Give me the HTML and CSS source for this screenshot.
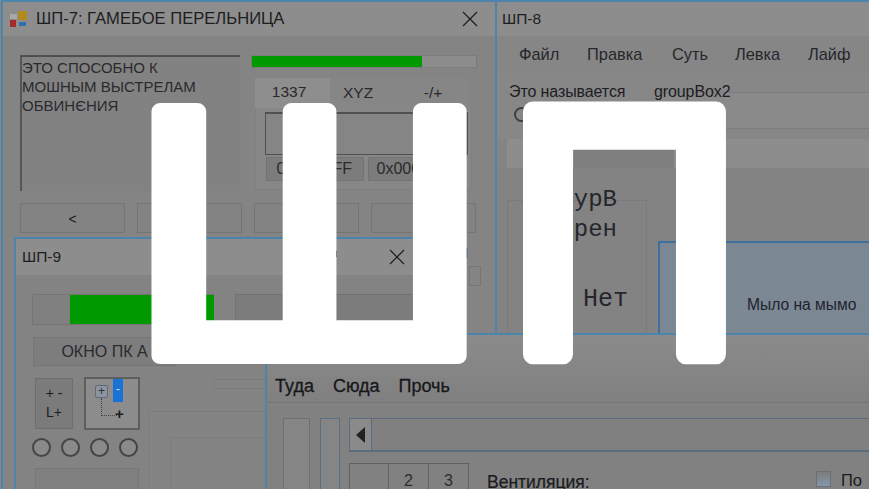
FILE: index.html
```html
<!DOCTYPE html>
<html lang="ru">
<head>
<meta charset="utf-8">
<title>ШП</title>
<link rel="stylesheet" href="styles.css">
</head>
<body>
<main class="desktop">

  <section class="win win7">
    <header class="titlebar">
      <svg class="appicon" width="20" height="18" viewBox="0 0 20 18"><rect x="1" y="4" width="7" height="5" fill="#a8a8a8"/><rect x="9" y="1" width="9" height="9" fill="#b08a1c"/><rect x="1" y="10" width="6" height="7" fill="#a52a2a"/><rect x="10" y="12" width="7" height="4" fill="#2f6fb0"/></svg>
      <h1 class="title t7">ШП-7: ГАМЕБОЕ ПЕРЕЛЬНИЦА</h1>
      <svg class="close c7" width="16" height="16" viewBox="0 0 16 16"><path d="M1 1 15 15M15 1 1 15" stroke="#1c1c1c" stroke-width="1.2" fill="none"/></svg>
    </header>
    <div class="body7">
      <div class="top7">
        <div class="memo">ЭТО СПОСОБНО К<br>МОШНЫМ ВЫСТРЕЛАМ<br>ОБВИНЄНИЯ</div>
        <div class="side7">
          <div class="bar7"><div class="fill" style="width:76%"></div></div>
          <div class="tabs">
            <span class="tab active">1337</span><span class="tab">XYZ</span><span class="tab">-/+</span>
          </div>
          <div class="tabpanel">
            <div class="inputbox"></div>
            <div class="hexrow"><span class="hex">0xFFFFFF</span><span class="hex hexl">0x000000</span></div>
          </div>
        </div>
      </div>
      <div class="btnrow"><span class="btn">&lt;</span><span class="btn"></span><span class="btn"></span><span class="btn"></span></div>
    </div>
    <span class="peek">И</span>
    <span class="peekbox"></span>
  </section>

  <section class="win win8">
    <header class="titlebar tb8"><h2 class="title t8">ШП-8</h2></header>
    <nav class="menu8"><span>Файл</span><span>Правка</span><span>Суть</span><span>Левка</span><span>Лайф</span></nav>
    <div class="groups8">
      <div class="g1"><span>Это называется</span><i class="radio small"></i></div>
      <div class="g2"><span>groupBox2</span></div>
    </div>
    <div class="strip8"></div>
    <div class="lower8">
      <div class="mono">
        <p>урВ</p><p>рен</p><p class="net">Нет</p>
      </div>
      <div class="soap">Мыло на мымо</div>
    </div>
  </section>

  <section class="win win9">
    <header class="titlebar tb9">
      <h2 class="title t9">ШП-9</h2>
      <i class="tick"></i>
      <svg class="close c9" width="16" height="16" viewBox="0 0 16 16"><path d="M1 1 15 15M15 1 1 15" stroke="#1c1c1c" stroke-width="1.2" fill="none"/></svg>
    </header>
    <div class="body9">
      <div class="row9a"><div class="bar9"><div class="fill fill9"></div></div><div class="box9"></div></div>
      <div class="okno">ОКНО ПК А</div>
      <div class="row9c">
        <div class="plusbox">+ -<br>L+</div>
        <div class="tree">
          <span class="exp">+</span><span class="sel">-</span>
          <span class="branch"></span><span class="leaf">+</span>
        </div>
      </div>
      <div class="radios"><i class="radio"></i><i class="radio"></i><i class="radio"></i><i class="radio"></i></div>
      <div class="box9b"></div>
    </div>
    <div class="faint f1"></div><div class="faint f2"></div><div class="faint f3"></div>
  </section>

  <section class="win win10">
    <nav class="menu10"><span>Туда</span><span>Сюда</span><span>Прочь</span></nav>
    <div class="body10">
      <div class="vbox"></div>
      <div class="vbox blue"></div>
      <div class="main10">
        <div class="scroll"><span class="arrow"><svg width="10" height="16" viewBox="0 0 10 16"><path d="M9 0V16L0 8Z" fill="#222"/></svg></span></div>
        <div class="row10">
          <div class="numtabs"><span></span><span>2</span><span>3</span></div>
          <strong class="vent">Вентиляция:</strong>
          <label class="check"><i class="cb"></i>По</label>
        </div>
      </div>
    </div>
  </section>

  <svg class="logo" width="869" height="489" viewBox="0 0 869 489" role="img">
    <text class="glyph gsh" transform="translate(128 356) scale(1.11 1)">Ш</text>
    <text class="glyph gp" transform="translate(506 354) scale(.934 1)">П</text>
  </svg>
</main>
</body>
</html>
```
FILE: styles.css
```css
*{box-sizing:border-box}
html,body{margin:0;padding:0}
body{width:869px;height:489px;overflow:hidden;background:#858585;font-family:"Liberation Sans",Arial,sans-serif;color:#1d1d22}
.desktop{position:relative;width:869px;height:489px;overflow:hidden}
.win{position:absolute;background:#848484;border:2px solid #4b85ab}
.titlebar{display:flex;align-items:center;background:#8d8d8d}
.title{margin:0;font-weight:400;font-size:16px;white-space:nowrap}
.close{margin-left:auto}

.win7{left:1px;top:0;width:496px;height:510px}
.win7 .titlebar{height:34px;padding:0 17px 0 6px;gap:7px}
.t7{font-size:16.6px}
.body7{padding:19px 18px 0 17px}
.top7{display:flex;gap:11px}
.memo{width:221px;height:136px;border-top:2px solid #4f4f4f;border-left:2px solid #555;font-size:15px;line-height:19px;padding:1px 0 0 0;color:#2a2a2e;background:#828282}
.side7{width:228px}
.bar7{height:13px;background:#8d8d8d;border:1px solid #7c7c7c}
.fill{height:100%;background:#009900}
.tabs{display:flex;margin:10px 0 0 4px;height:29px}
.tab{width:69px;text-align:center;font-size:15.5px;line-height:26px;padding-top:2px;background:#868686;color:#28282c}
.tab:nth-child(2){padding-right:12px}
.tab.active{width:75px;background:#8e8e8e;height:30px;padding:1px 6px 0 0}
.tabpanel{margin:-1px 5px 0 4px;height:84px;background:#878787;padding:5px 0 0 9px;border:1px solid #808080}
.inputbox{width:203px;height:43px;border:1px solid #505050;border-width:2px 2px 1px 1px;background:#858585}
.hexrow{display:flex;gap:4px;margin-top:2px;margin-left:1px}
.hex{width:98px;height:24px;border:1px solid #747474;background:#7c7c7c;font-size:16px;line-height:22px;text-align:left;padding-left:10px;color:#2a2a2e;white-space:nowrap;overflow:hidden}
.hexl{padding-left:8px}
.btnrow{display:grid;grid-template-columns:105px 105px 105px 105px;column-gap:12px;margin:12px 0 0 0}
.btn{height:30px;border:1px solid #757575;background:#838383;text-align:center;font-size:14px;line-height:30px}
.peek{position:absolute;left:455px;top:243px;font-size:14px;color:#1d1d22}
.peekbox{position:absolute;left:466px;top:264px;width:12px;height:20px;border:1px solid #757575}

.win8{left:495px;top:0;width:376px;height:335px;background:#848484}
.tb8{height:34px;padding-left:5px}
.t8{font-size:15.5px}
.menu8{display:flex;height:36px;align-items:center;background:#868686;padding-left:22px;font-size:16.4px;color:#26262c}
.menu8 span:nth-child(1){width:68px}
.menu8 span:nth-child(2){width:85px}
.menu8 span:nth-child(3){width:63px}
.menu8 span:nth-child(4){width:73px}
.groups8{display:flex;height:67px;font-size:16px;padding-left:12px;background:#878787;white-space:nowrap;letter-spacing:-.1px}
.g1{width:145px;padding-top:11px;display:flex;flex-direction:column;gap:9px;align-items:flex-start}
.g2{flex:1;padding-top:11px;background:linear-gradient(#878787 20px,#7d7d7d 20px,#7d7d7d 21px,#8a8a8a 21px,#8a8a8a 56px,#7d7d7d 56px,#7d7d7d 57px,#878787 57px)}
.radio{display:block;width:18px;height:18px;border:2px solid #3f3f3f;border-radius:50%;background:#8f8f8f}
.radio.small{width:15px;height:15px;background:none;margin:-3px 0 0 5px}
.strip8{height:29px;margin-left:10px;background:linear-gradient(90deg,#8d8d8d 67px,#7f7f7f 67px,#7f7f7f 167px,#8d8d8d 167px)}
.lower8{display:flex;height:165px;padding:32px 0 0 10px;background:#838383}
.mono{width:140px;border:1px solid #7b7b7b;border-bottom:0;font-family:"Liberation Mono","Courier New",monospace;font-size:24px;text-align:right;padding-right:29px;margin-right:11px;color:#26262c}
.mono p{margin:0;line-height:30px;white-space:nowrap}
.mono p:first-child{margin-top:-16px}
.mono .net{margin-top:40px;margin-right:-11px;font-size:25px}
.soap{flex:1;margin-top:41px;border:2px solid #3f6f9c;border-right:0;border-bottom:0;background:#7b8893;font-size:15.6px;text-align:left;padding:53px 0 0 87px;color:#1f2230;white-space:nowrap}

.win9{left:14px;top:237px;width:420px;height:260px;background:#838383}
.tb9{height:36px;padding:0 27px 0 6px;position:relative}
.t9{font-size:15.5px}
.tick{position:absolute;left:319px;top:12px;width:2px;height:6px;background:#222}
.body9{padding:19px 0 0 16px;width:270px;display:flex;flex-direction:column}
.row9a{display:flex;gap:21px;height:31px}
.bar9{width:182px;background:#808080;border:1px solid #757575;padding-left:37px;flex:none}
.fill9{width:144px}
.box9{width:200px;height:28px;border:1px solid #727272;background:#7c7c7c;flex:none}
.okno{width:143px;height:29px;margin:12px 0 0 1px;border:1px solid #757575;background:#7d7d7d;font-size:16px;line-height:27px;text-align:center;white-space:nowrap;color:#2a2a30}
.row9c{display:flex;gap:11px;margin:12px 0 0 3px}
.plusbox{width:38px;height:51px;border:1px solid #6e6e6e;background:#7b7b7b;font-size:14px;line-height:19px;text-align:center;padding-top:5px;color:#1c1c20}
.tree{position:relative;width:56px;height:53px;margin-top:-1px;border:2px solid #5e5e5e;background:#8c8c8c}
.exp{position:absolute;left:9px;top:6px;width:13px;height:13px;border:1px solid #5f6a7c;background:#8d93a0;border-radius:2px;font-size:12px;line-height:10px;text-align:center;color:#333}
.sel{position:absolute;left:27px;top:0;width:10px;height:23px;background:#1a72d6;color:#d8e4f0;font-size:12px;line-height:20px;text-align:center}
.branch{position:absolute;left:15px;top:19px;width:16px;height:18px;border-left:1px dotted #444;border-bottom:1px dotted #444}
.leaf{position:absolute;left:29px;top:27px;font-size:15px;line-height:15px;font-weight:700;color:#1a1a1a}
.radios{display:flex;gap:10px;margin-top:8px}
.radios .radio{width:19px;height:19px;background:#8a8a8a;border-color:#444}
.box9b{width:104px;height:60px;margin:11px 0 0 3px;border:1px solid #767676;background:#808080}
.faint{position:absolute;border:1px solid #7c7c7c}
.f1{left:132px;top:172px;width:130px;height:100px}
.f2{left:154px;top:198px;width:110px;height:60px}
.f3{left:197px;top:140px;width:55px;height:10px}

.win10{left:265px;top:333px;width:606px;height:158px;background:#818181;border-right:0}
.menu10{display:flex;gap:19px;height:68px;padding:41px 0 0 8px;background:linear-gradient(#8b8b8b,#808080);border-bottom:1px solid #767676;font-size:18px;color:#17171a;-webkit-text-stroke:.3px #17171a}
.body10{display:flex;padding:15px 0 0 16px}
.vbox{width:27px;height:80px;border:1px solid #6f6f6f;background:#858585;margin-right:10px}
.vbox.blue{width:20px;border-color:#5b6f82;margin-right:9px}
.main10{flex:1;min-width:0}
.scroll{height:34px;border:1px solid #5a6c7e;border-width:1px 0 2px 1px;background:#808080}
.arrow{display:flex;align-items:center;justify-content:center;width:22px;height:31px;background:#8a8a8a;border-right:1px solid #5a6c7e}
.row10{display:flex;margin-top:11px}
.numtabs{display:grid;grid-template-columns:39px 40px 39px;border:1px solid #5f5f5f;height:40px;font-size:16px;text-align:center;color:#2d2d30}
.numtabs span{border-right:1px solid #5f5f5f;padding-top:8px;height:40px}
.numtabs span:last-child{border-right:0}
.vent{font-weight:400;font-size:17.5px;margin:9px 0 0 18px;color:#1b1b1e;width:331px;-webkit-text-stroke:.2px #1b1b1e}
.check{display:flex;gap:10px;font-size:16.5px;margin-top:8px;margin-left:-2px;color:#1b1b1e}
.cb{display:block;width:15px;height:16px;border:1px solid #6f6f6f;background:linear-gradient(#7c7c7c,#8497ad)}

.logo{position:absolute;left:0;top:0;pointer-events:none}
.glyph{font-family:"Liberation Sans",Arial,sans-serif;fill:#fff;stroke:#fff;stroke-linejoin:round;vector-effect:non-scaling-stroke}
.gsh{font-size:356px;stroke-width:17px}
.gp{font-size:352px;stroke-width:20px}
```
